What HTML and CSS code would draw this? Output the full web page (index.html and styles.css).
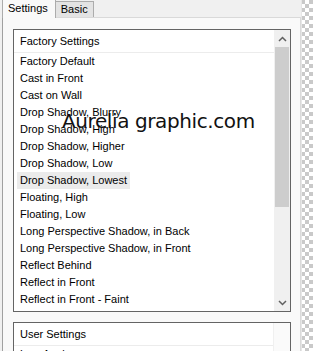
FILE: index.html
```html
<!DOCTYPE html>
<html lang="en">
<head>
    <meta charset="UTF-8">
    <title>Presets</title>
    <link rel="stylesheet" href="styles.css">
</head>
<body>
    <div class="page">
        <div class="panel">
            <div class="tabs">
                <div class="tab active">Settings</div>
                <div class="tab">Basic</div>
            </div>
            <div class="panel-body">
                <div class="listbox main-list">
                    <div class="list-content">
                        <div class="list-header">Factory Settings</div>
                        <div class="list-items">
                            <div class="item">Factory Default</div>
                            <div class="item">Cast in Front</div>
                            <div class="item">Cast on Wall</div>
                            <div class="item">Drop Shadow, Blurry</div>
                            <div class="item">Drop Shadow, High</div>
                            <div class="item">Drop Shadow, Higher</div>
                            <div class="item">Drop Shadow, Low</div>
                            <div class="item"><span class="hover">Drop Shadow, Lowest</span></div>
                            <div class="item">Floating, High</div>
                            <div class="item">Floating, Low</div>
                            <div class="item">Long Perspective Shadow, in Back</div>
                            <div class="item">Long Perspective Shadow, in Front</div>
                            <div class="item">Reflect Behind</div>
                            <div class="item">Reflect in Front</div>
                            <div class="item">Reflect in Front - Faint</div>
                        </div>
                    </div>
                    <div class="scrollbar">
                        <div class="arrow">
                            <svg width="9" height="6" viewBox="0 0 9 6"><path d="M1 5 L4.5 1.5 L8 5" fill="none" stroke="#606060" stroke-width="1.5"/></svg>
                        </div>
                        <div class="track">
                            <div class="thumb"></div>
                        </div>
                        <div class="arrow">
                            <svg width="9" height="6" viewBox="0 0 9 6"><path d="M1 1 L4.5 4.5 L8 1" fill="none" stroke="#606060" stroke-width="1.5"/></svg>
                        </div>
                    </div>
                </div>
                <div class="listbox user-list">
                    <div class="list-content">
                        <div class="list-header">User Settings</div>
                        <div class="list-items">
                            <div class="item">Low Angle</div>
                        </div>
                    </div>
                    <div class="scrollbar empty"></div>
                </div>
            </div>
            <div class="watermark">Aurelia graphic.com</div>
        </div>
        <div class="checker"></div>
    </div>
</body>
</html>
```

FILE: styles.css
```css
body {
    margin: 0;
    background-color: #f0f0f0;
    font-family: 'Liberation Sans', Arial, sans-serif;
    font-size: 11px;
    color: #000;
    overflow: hidden;
}

.page {
    display: flex;
    height: 351px;
}

.panel {
    position: relative;
    width: 299px;
    padding-left: 2px;
    display: flex;
    flex-direction: column;
}

/* Tabs */
.tabs {
    display: flex;
    align-items: flex-end;
    height: 17px;
}

.tab {
    padding: 0 5px;
    height: 15px;
    line-height: 15px;
    background-color: #e3e3e3;
    border: 1px solid #acacac;
    border-bottom: none;
    margin-left: -1px;
}

.tab.active {
    height: 18px;
    line-height: 17px;
    background-color: #f9f9f9;
    margin: 0 0 -1px 0;
    padding: 0 7px 0 5px;
    position: relative;
    z-index: 1;
}

.panel-body {
    flex: 1;
    border: 1px solid #d9d9d9;
    border-left-color: #a0a0a0;
    border-bottom: none;
    background-color: #f9f9f9;
    padding: 11px 9px 0 10px;
}

/* List boxes */
.listbox {
    display: flex;
    background-color: #fff;
    border: 1px solid #646464;
}

.main-list {
    height: 281px;
}

.user-list {
    margin-top: 10px;
    height: 40px;
}

.list-content {
    flex: 1;
    display: flex;
    flex-direction: column;
    overflow: hidden;
}

.list-header {
    height: 22px;
    line-height: 22px;
    padding-left: 6px;
    border-bottom: 1px solid #ececec;
}

.list-items {
    padding-left: 3px;
}

.item {
    height: 17px;
    line-height: 17px;
    white-space: nowrap;
}

.item,
.hover {
    padding: 0 3px;
}

.hover {
    display: inline-block;
    margin-left: -3px;
    background-color: #ebebeb;
}

/* Scrollbar */
.scrollbar {
    width: 16px;
    background-color: #f0f0f0;
    display: flex;
    flex-direction: column;
}

.scrollbar.empty {
    background-color: #fafafa;
    border-left: 1px solid #f0f0f0;
}

.arrow {
    height: 17px;
    display: flex;
    align-items: center;
    justify-content: center;
}

.track {
    flex: 1;
}

.thumb {
    height: 160px;
    margin: 0 1px;
    background-color: #cdcdcd;
}

/* watermark stamped over the list */
.watermark {
    position: absolute;
    left: 62px;
    top: 109px;
    font-family: 'DejaVu Sans', sans-serif;
    font-size: 20px;
    letter-spacing: -0.4px;
    color: #111;
}

.checker {
    flex: 1;
    border-left: 1px solid #e6e6e6;
    background-color: #fff;
    background-image: conic-gradient(#c9c9c9 25%, #fff 0 50%, #c9c9c9 0 75%, #fff 0);
    background-size: 8px 8px;
    background-position: 3px 0;
}
```
